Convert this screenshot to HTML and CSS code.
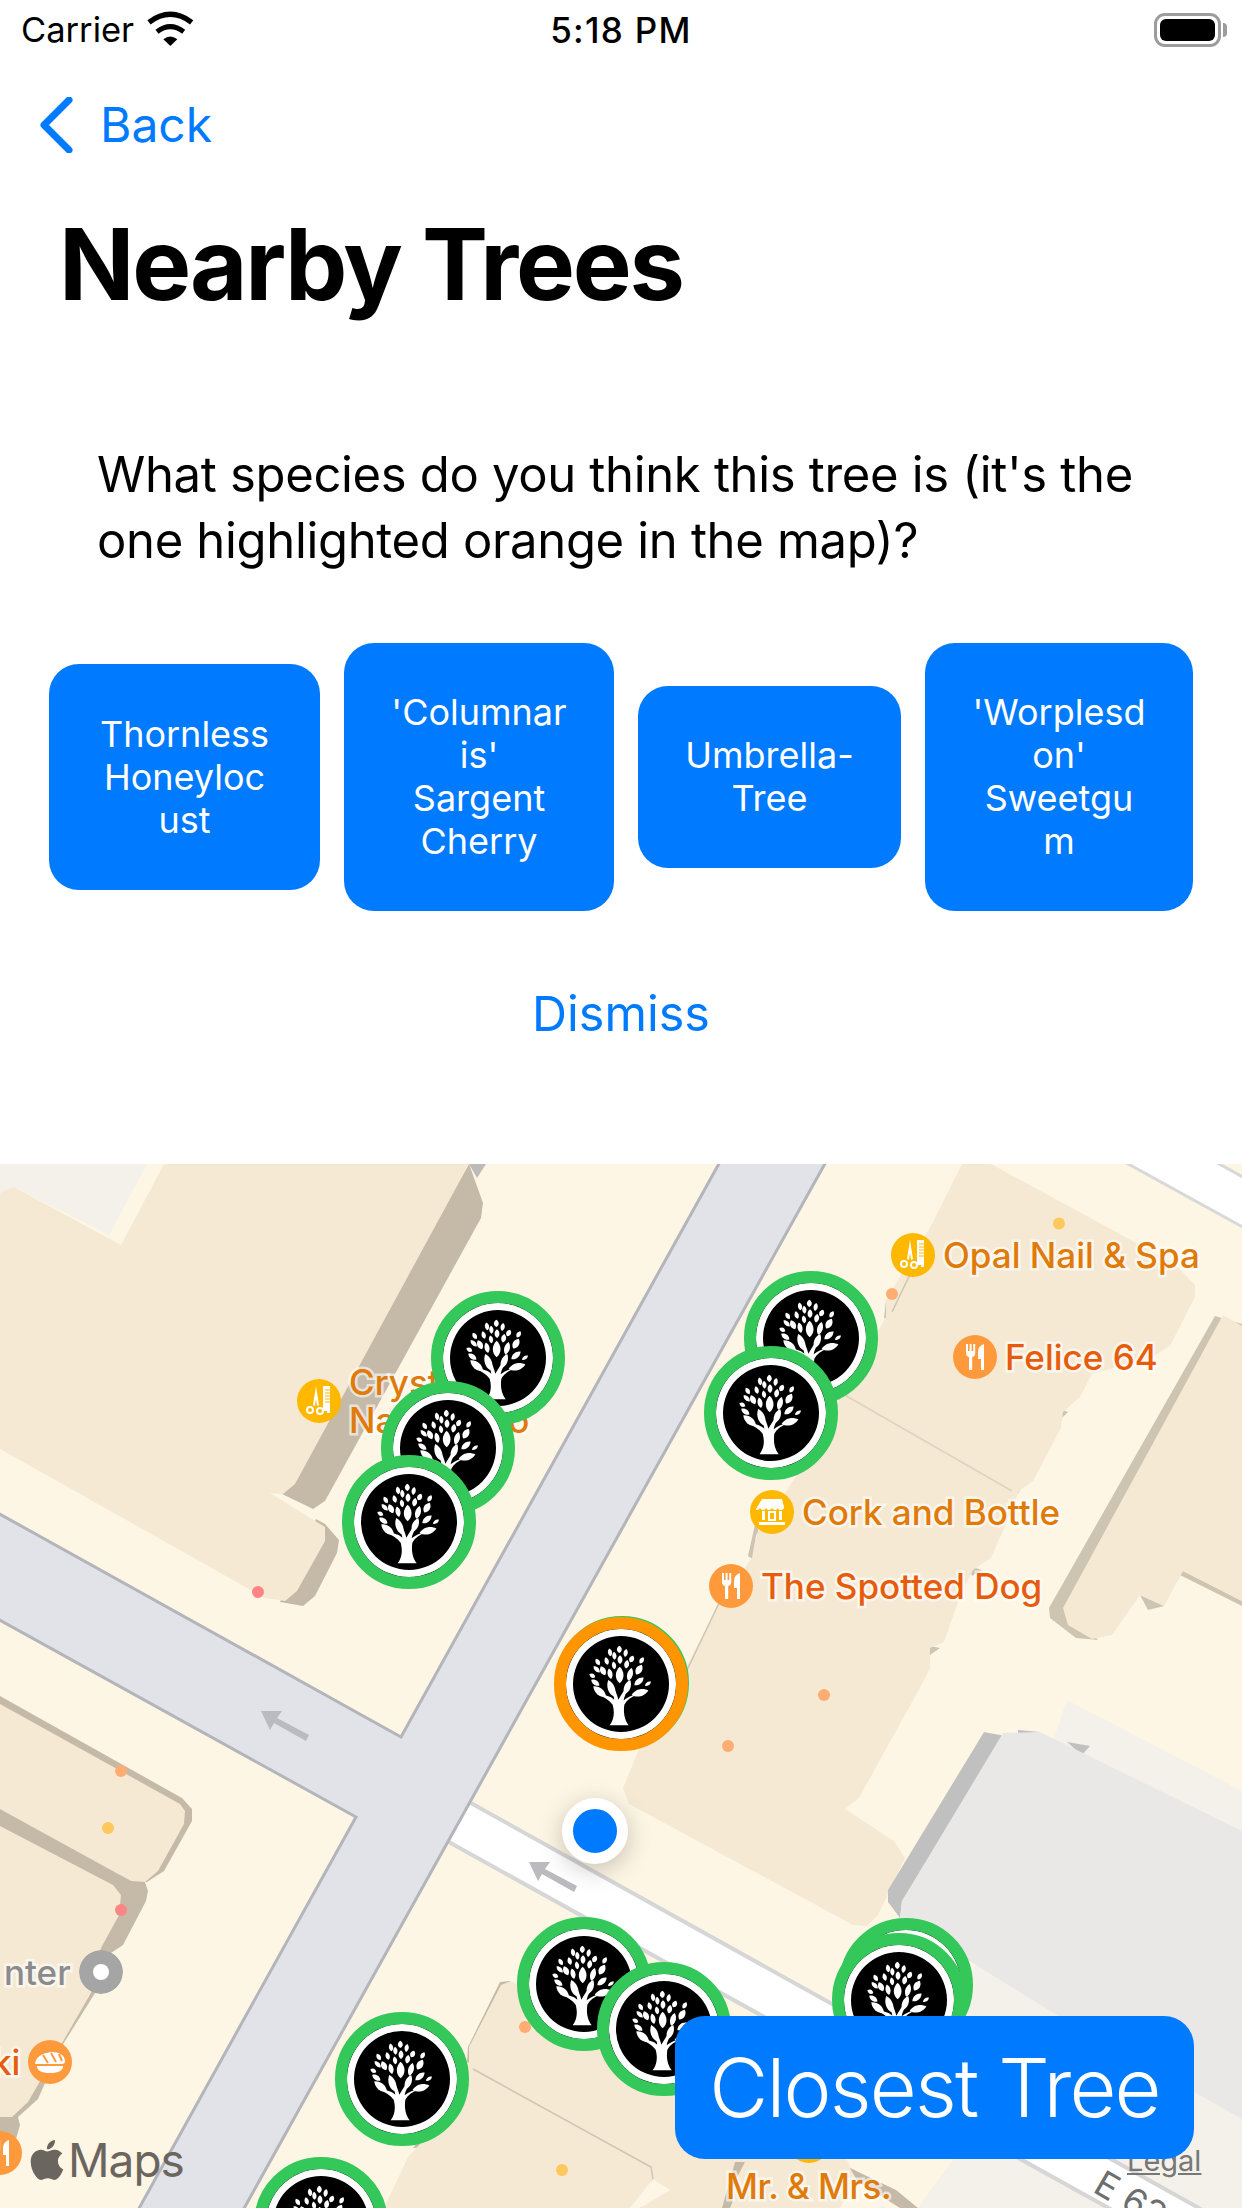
FILE: index.html
```html
<!DOCTYPE html>
<html lang="en">
<head>
<meta charset="utf-8">
<title>Nearby Trees</title>
<link rel="stylesheet" href="styles.css">
</head>
<body>
<header class="status">
  <div class="status-left">
    <span class="carrier">Carrier</span>
    <svg class="wifi" viewBox="0 0 180 150"><path d="M33 52Q97 4 161 52" fill="none" stroke="#000" stroke-width="16"/><path d="M57 80Q97 50 137 80" fill="none" stroke="#000" stroke-width="15"/><path d="M76 103Q97 86 118 103L97 123Z"/></svg>
  </div>
  <span class="time">5:18 PM</span>
  <div class="battery"><span class="battery-level"></span></div>
</header>
<nav class="nav">
  <svg class="chevron" viewBox="0 0 34 56"><path d="M30 3L5 28L30 53" fill="none" stroke="#007aff" stroke-width="7" stroke-linecap="round" stroke-linejoin="round"/></svg>
  <span class="back">Back</span>
</nav>
<h1 class="title">Nearby Trees</h1>
<p class="question">What species do you think this tree is (it's the<br>one highlighted orange in the map)?</p>
<section class="options">
  <button class="option opt-a">Thornless<br>Honeyloc<br>ust</button>
  <button class="option opt-b">'Columnar<br>is'<br>Sargent<br>Cherry</button>
  <button class="option opt-c">Umbrella-<br>Tree</button>
  <button class="option opt-d">'Worplesd<br>on'<br>Sweetgu<br>m</button>
</section>
<div class="dismiss">Dismiss</div>
<main class="map">
  <svg class="map-svg" viewBox="0 1164 1242 1044">
    <defs>
      <path id="leaf" d="M0-1C1.35-.45 1.45.45 0 1C-1.45.45-1.35-.45 0-1Z"/>
      <symbol id="tree" viewBox="0 0 402 402">
        <g fill="#fff">
          <path d="M167 325C181 305 182 285 176 263C166 249 150 240 128 232C150 232 170 238 181 248C179 235 175 222 170 212L178 210C185 222 190 236 193 248C199 238 207 224 216 212L223 215C216 229 210 240 209 250C222 240 236 234 250 232C232 240 218 250 211 263C208 285 210 305 224 325Z"/>
          <use href="#leaf" transform="translate(196 97) rotate(0) scale(7 11)"/>
          <use href="#leaf" transform="translate(168 106) rotate(-10) scale(6 12)"/>
          <use href="#leaf" transform="translate(215 108) rotate(10) scale(6 12)"/>
          <use href="#leaf" transform="translate(181 116) rotate(-5) scale(6 12)"/>
          <use href="#leaf" transform="translate(198 128) rotate(0) scale(7 13)"/>
          <use href="#leaf" transform="translate(233 126) rotate(25) scale(7 11)"/>
          <use href="#leaf" transform="translate(263 130) rotate(30) scale(6 11)"/>
          <use href="#leaf" transform="translate(131 135) rotate(-30) scale(6 11)"/>
          <use href="#leaf" transform="translate(158 132) rotate(-15) scale(6 12)"/>
          <use href="#leaf" transform="translate(180 145) rotate(-10) scale(6 12)"/>
          <use href="#leaf" transform="translate(218 142) rotate(10) scale(7 13)"/>
          <use href="#leaf" transform="translate(147 161) rotate(-25) scale(8 15)"/>
          <use href="#leaf" transform="translate(197 174) rotate(0) scale(11 25)"/>
          <use href="#leaf" transform="translate(168 170) rotate(-12) scale(7 16)"/>
          <use href="#leaf" transform="translate(228 172) rotate(15) scale(8 20)"/>
          <use href="#leaf" transform="translate(255 158) rotate(30) scale(9 17)"/>
          <use href="#leaf" transform="translate(128 157) rotate(-45) scale(6 13)"/>
          <use href="#leaf" transform="translate(115 176) rotate(-60) scale(6 10)"/>
          <use href="#leaf" transform="translate(124 197) rotate(-55) scale(7 15)"/>
          <use href="#leaf" transform="translate(172 214) rotate(-20) scale(10 27)"/>
          <use href="#leaf" transform="translate(137 224) rotate(-50) scale(10 25)"/>
          <use href="#leaf" transform="translate(220 210) rotate(22) scale(9 23)"/>
          <use href="#leaf" transform="translate(255 193) rotate(50) scale(8 18)"/>
          <use href="#leaf" transform="translate(282 200) rotate(55) scale(5 11)"/>
          <use href="#leaf" transform="translate(258 227) rotate(75) scale(10 26)"/>
        </g>
      </symbol>
      <symbol id="i-food" viewBox="0 0 44 44">
        <path fill="#fff" d="M13 9h2v7h1.6V9h2v7h1.6V9h2v9q0 3-3 4v13h-3.200V22q-3-1-3-4zM31 9v26h-3V24h-3v-7q0-6 6-8z"/>
      </symbol>
      <symbol id="i-shop" viewBox="0 0 44 44">
        <path fill="#fff" d="M12 9h20l2 8q0 3-3 3t-3-2q-1 2-3 2t-3-2q-1 2-3 2t-3-2q-1 2-3 2t-3-2q-1 2-3 2t-1-1zM12 21h3v9h-3zM29 21h3v9h-3zM18 21h8v2h-6v6h4v-6h2v8h-8zM9 32h26v3H9z"/>
      </symbol>
      <symbol id="i-hair" viewBox="0 0 44 44">
        <path fill="#fff" d="M19 7l3 19-2 1-1-7-1 7-2-1zM26 7h7v27h-3v-2h-4z"/>
        <path stroke="#ffb800" stroke-width="1.200" d="M28 11h5M28 14h5M28 17h5M28 20h5M28 23h5"/>
        <circle cx="13" cy="31" r="3" fill="none" stroke="#fff" stroke-width="2"/>
        <circle cx="23" cy="32" r="3" fill="none" stroke="#fff" stroke-width="2"/>
      </symbol>
      <symbol id="i-sushi" viewBox="0 0 44 44">
        <path fill="#fff" d="M7 24q1-10 16-12 13 0 14 9 0 3-3 3z"/>
        <path fill="none" stroke="#ff9a3c" stroke-width="2" d="M15 15l5 8M23 13l5 9M31 14l3 7"/>
        <path fill="#fff" d="M9 26h26q0 7-13 7T9 26z"/>
      </symbol>
    </defs>

    <!-- ground -->
    <rect x="0" y="1164" width="1242" height="1044" fill="#fef6e4"/>
    <path fill="#f3f1ea" d="M0 1164H147L109 1235L14 1187L10 1197L0 1192Z"/>
    <path fill="#f3f1ea" d="M1067 1700L1242 1791V2208H880L950 2040Z"/>

    <!-- white roads -->
    <path fill="#fff" stroke="#d8d8d8" stroke-width="3" d="M1121 1160L1250 1231V1181L1212 1160Z"/>
    <path fill="#fff" stroke="#d6d6d6" stroke-width="4" d="M469 1802L1260 2242L1260 2292L447 1841Z"/>
    <!-- grey roads -->
    <path fill="#e1e3e8" stroke="#b3b5ba" stroke-width="3" d="M721 1160L401 1737L-4 1512V1618L356 1817L137 2212H242L827 1160Z"/>

    <!-- building top-left -->
    <path fill="#bdbab8" d="M469 1164H486L477 1178Z"/>
    <path fill="#c5baa8" d="M469 1164L483 1203L481 1218L325 1501L313 1509L280 1493Z"/>
    <path fill="#c5baa8" d="M316 1519L325 1524L339 1540L337 1553L315 1596L303 1606L280 1602Z"/>
    <path fill="#f5e9d4" d="M164 1164H469L295 1484L283 1494L270 1493L325 1527L325 1541L297 1591L285 1601L265 1598L0 1449V1193L14 1187L121 1245Z"/>

    <!-- building top right -->
    <path fill="#cdc4b2" d="M932 1224L941 1238L929 1232ZM886 1300L900 1320L884 1318ZM1100 1330L1118 1352L1092 1342ZM1053 1406L1068 1412L1060 1420ZM1010 1490L1022 1486L1018 1494ZM756 1520L748 1556L766 1568ZM796 1464L815 1480L798 1480ZM845 1394L855 1402L838 1400ZM969 1566L982 1570L972 1576ZM925 1645L940 1648L930 1655Z"/>
    <path fill="#f5e9d4" d="M962 1164H991L1175 1264L1195 1285V1297L1170 1346L1152 1357L1092 1374L1080 1397L1063 1412L1061 1428L1033 1481L1019 1491L1005 1526L991 1558L973 1570L962 1591L944 1642L930 1648V1668L922 1684L859 1798L845 1809L894 1841L905 1858L878 1915L867 1926L853 1925L629 1804L623 1788L639 1749L684 1672L720 1601L752 1558L756 1535L795 1478L843 1394L886 1317V1300L932 1224Z"/>
    <path fill="none" stroke="#ddd3c1" stroke-width="1.500" d="M843 1394L1012 1491"/>
    <path fill="none" stroke="#cfc5b3" stroke-width="1.500" d="M915 1264L892 1312M720 1601L687 1670"/>

    <!-- building right -->
    <path fill="#cdc4b2" d="M1215 1316L1242 1324V1332L1223 1322L1079 1620L1098 1640L1076 1638L1050 1618L1049 1608ZM1183 1571L1242 1601V1606L1180 1575ZM1140 1595L1164 1606L1148 1610Z"/>
    <path fill="#f5e9d4" d="M1223 1315L1242 1326V1601L1183 1571L1164 1606L1140 1595L1112 1635L1092 1639L1068 1625L1063 1608Z"/>

    <!-- grey building -->
    <path fill="#c0c0c0" d="M984 1732L1005 1736L902 1901L900 1918L888 1902L888 1890ZM1018 1730L1040 1732L1032 1745L1018 1737ZM1067 1742L1090 1746L1082 1755Z"/>
    <path fill="#e9e8e6" d="M1003 1733L1040 1732L1242 1831V2119L1057 2015L900 1918L902 1901Z"/>

    <!-- building lower-left -->
    <path fill="#c5baa8" d="M0 1696L182 1798L192 1809V1821L164 1871L147 1882L131 1881L0 1806Z"/>
    <path fill="#f5e9d4" d="M0 1704L180 1804L185 1811L184 1824L158 1871L145 1882L131 1881L0 1809Z"/>
    <path fill="#c5baa8" d="M0 1809L131 1881L145 1882L148 1891L146 1901L123 1945L111 1953L95 1993L60 2049L38 2099L18 2117L20 2125L16 2139L0 2132Z"/>
    <path fill="#f5e9d4" d="M0 1826L113 1885L121 1895L119 1915L101 1948L91 1993L28 2102L12 2117L0 2117Z"/>

    <!-- buildings bottom centre -->
    <path fill="#c5baa8" d="M511 1981L500 1982L468 2047L467 2062L480 2070ZM420 2144L432 2150L424 2146ZM413 2148L432 2146L420 2140Z"/>
    <path fill="#f5e9d4" d="M511 1981L780 2128L740 2208H384L408 2157L420 2144L469 2062V2047L501 1985Z"/>
    <path fill="none" stroke="#cfc5b3" stroke-width="1.500" d="M473 2069L651 2167L653 2179L640 2208"/>
    <path fill="#fef6e4" d="M653 2179L670 2190L640 2208L630 2208Z"/>
    <path fill="#c5baa8" d="M745 2162L728 2195L740 2208H722L735 2162ZM850 2168L900 2196L918 2208H885L860 2186Z"/>
    <path fill="#f5e9d4" d="M760 2130L838 2142L856 2178L850 2190L840 2208H730L750 2160Z"/>
    <path fill="#fef6e4" d="M856 2150L960 2150L918 2208H885L860 2190Z"/>
    <path fill="#c5baa8" d="M850 2168L896 2190L918 2208H900L858 2182Z"/>

    <!-- small dots -->
    <g>
      <circle cx="1059" cy="1223.500" r="6" fill="#ffc85c"/>
      <circle cx="892" cy="1294" r="6" fill="#ffad73"/>
      <circle cx="258" cy="1592" r="6" fill="#ff8585"/>
      <circle cx="121" cy="1771" r="6" fill="#ffad73"/>
      <circle cx="108" cy="1828" r="6" fill="#ffc85c"/>
      <circle cx="121" cy="1910" r="6" fill="#ff8585"/>
      <circle cx="525" cy="2027" r="6" fill="#ffad73"/>
      <circle cx="562" cy="2170" r="6" fill="#ffc85c"/>
      <circle cx="824" cy="1695" r="6" fill="#ffad73"/>
      <circle cx="728" cy="1746" r="6" fill="#ffad73"/>
    </g>

    <!-- one way arrows -->
    <path fill="#b9bbbe" d="M261 1711L282 1711L277 1718L309 1735L306 1741L274 1723L270 1730Z"/>
    <path fill="#b9bbbe" d="M529 1862L550 1862L545 1869L577 1886L574 1892L542 1874L538 1881Z"/>
  </svg>

  <!-- map labels -->
  <div class="poi" style="left:891px;top:69px"><svg class="poi-icon amber" viewBox="0 0 44 44"><use href="#i-hair"/></svg><span class="poi-text orange-text">Opal Nail &amp; Spa</span></div>
  <div class="poi" style="left:953px;top:171px"><svg class="poi-icon tangerine" viewBox="0 0 44 44"><use href="#i-food"/></svg><span class="poi-text red-text">Felice 64</span></div>
  <div class="poi" style="left:750px;top:326px"><svg class="poi-icon amber" viewBox="0 0 44 44"><use href="#i-shop"/></svg><span class="poi-text orange-text">Cork and Bottle</span></div>
  <div class="poi" style="left:709px;top:400px"><svg class="poi-icon tangerine" viewBox="0 0 44 44"><use href="#i-food"/></svg><span class="poi-text red-text">The Spotted Dog</span></div>
  <div class="poi poi-two" style="left:297px;top:215px"><svg class="poi-icon amber" viewBox="0 0 44 44"><use href="#i-hair"/></svg><span class="poi-text orange-text">Crystal<br>Nail Studio</span></div>
  <div class="poi" style="left:4px;top:786px"><span class="poi-text grey-text">nter</span><svg class="poi-icon" viewBox="0 0 44 44"><circle cx="22" cy="22" r="22" fill="#a5a5a5"/><circle cx="22" cy="22" r="8" fill="#fff"/></svg></div>
  <div class="poi" style="left:-8px;top:876px"><span class="poi-text red-text">ki</span><svg class="poi-icon tangerine" viewBox="0 0 44 44"><use href="#i-sushi"/></svg></div>
  <div class="poi" style="left:-22px;top:967px"><svg class="poi-icon tangerine" viewBox="0 0 44 44"><use href="#i-food"/></svg></div>
  <div class="poi" style="left:787px;top:955px"><svg class="poi-icon amber" viewBox="0 0 44 44"><use href="#i-shop"/></svg></div>
  <span class="poi-text orange-text mrs">Mr. &amp; Mrs.<br>Naif</span>
  <span class="road-label">E 63rd St</span>

  <!-- tree pins -->
  <div class="pin" style="left:431px;top:127px"><svg class="tree"><use href="#tree" width="134" height="134"/></svg></div>
  <div class="pin" style="left:381px;top:217px"><svg class="tree"><use href="#tree" width="134" height="134"/></svg></div>
  <div class="pin" style="left:342px;top:291px"><svg class="tree"><use href="#tree" width="134" height="134"/></svg></div>
  <div class="pin" style="left:744px;top:107px"><svg class="tree"><use href="#tree" width="134" height="134"/></svg></div>
  <div class="pin" style="left:704px;top:182px"><svg class="tree"><use href="#tree" width="134" height="134"/></svg></div>
  <div class="pin" style="left:555px;top:452px"><svg class="tree"><use href="#tree" width="134" height="134"/></svg></div>
  <div class="pin pin-selected" style="left:554px;top:453px"><svg class="tree"><use href="#tree" width="134" height="134"/></svg></div>
  <div class="pin" style="left:517px;top:753px"><svg class="tree"><use href="#tree" width="134" height="134"/></svg></div>
  <div class="pin" style="left:597px;top:798px"><svg class="tree"><use href="#tree" width="134" height="134"/></svg></div>
  <div class="pin" style="left:335px;top:848px"><svg class="tree"><use href="#tree" width="134" height="134"/></svg></div>
  <div class="pin" style="left:254px;top:993px"><svg class="tree"><use href="#tree" width="134" height="134"/></svg></div>
  <div class="pin" style="left:839px;top:754px"><svg class="tree"><use href="#tree" width="134" height="134"/></svg></div>
  <div class="pin" style="left:832px;top:769px"><svg class="tree"><use href="#tree" width="134" height="134"/></svg></div>

  <div class="user-dot"></div>

  <div class="maps-logo">
    <svg class="apple" viewBox="0 0 24 24"><path fill="#6a665f" d="M12.152 6.896c-.948 0-2.415-1.078-3.96-1.04-2.04.027-3.91 1.183-4.961 3.014-2.117 3.675-.546 9.103 1.519 12.09 1.013 1.454 2.208 3.09 3.792 3.039 1.52-.065 2.09-.987 3.935-.987 1.831 0 2.35.987 3.96.948 1.637-.026 2.676-1.48 3.676-2.948 1.156-1.688 1.636-3.325 1.662-3.415-.039-.013-3.182-1.221-3.22-4.857-.026-3.04 2.48-4.494 2.597-4.559-1.429-2.09-3.623-2.324-4.39-2.376-2-.156-3.675 1.09-4.61 1.09zM15.53 3.83c.843-1.012 1.4-2.427 1.245-3.83-1.207.052-2.662.805-3.532 1.818-.78.896-1.454 2.338-1.273 3.714 1.338.104 2.715-.688 3.559-1.701"/></svg>
    <span class="maps-word">Maps</span>
  </div>
  <span class="legal">Legal</span>
  <button class="closest">Closest Tree</button>
</main>
</body>
</html>
```
FILE: styles.css
```css
* { box-sizing: border-box; }
html, body { margin: 0; padding: 0; }
body {
  width: 1242px;
  height: 2208px;
  background: #fff;
  color: #000;
  font-family: Inter, "Liberation Sans", sans-serif;
  display: flex;
  flex-direction: column;
  overflow: hidden;
}

/* status bar */
.status {
  height: 60px;
  flex: none;
  padding: 0 16px 0 21px;
  display: flex;
  align-items: center;
  justify-content: space-between;
  position: relative;
}
.status-left { display: flex; align-items: center; gap: 14px; }
.carrier { font-size: 34.500px; line-height: 62px; }
.wifi { width: 60px; height: 50px; margin-left: -10px; margin-top: 0; }
.time {
  font-size: 35px;
  font-weight: 500;
  letter-spacing: 1.300px;
  line-height: 62px;
  position: absolute;
  left: 0;
  right: 0;
  text-align: center;
}
.battery {
  width: 67px;
  height: 34px;
  margin-right: 5px;
  border: 3px solid #9c9c9c;
  border-radius: 11px;
  padding: 3px;
  position: relative;
}
.battery::after {
  content: "";
  position: absolute;
  right: -9px;
  top: 7px;
  width: 4px;
  height: 14px;
  background: #9c9c9c;
  border-radius: 0 4px 4px 0;
}
.battery-level { display: block; height: 100%; background: #000; border-radius: 6px; }

/* nav */
.nav {
  height: 130px;
  flex: none;
  padding: 0 0 0 39px;
  display: flex;
  align-items: center;
  gap: 27px;
}
.chevron { width: 34px; height: 56px; flex: none; }
.back { font-size: 48px; color: #007aff; line-height: 60px; }

.title {
  margin: 14px 0 0;
  padding-left: 59px;
  font-size: 99px;
  line-height: 120px;
  font-weight: 700;
  letter-spacing: -2.200px;
  flex: none;
}
.question {
  margin: 118px 0 0;
  padding-left: 97px;
  font-size: 49px;
  line-height: 66px;
  letter-spacing: -.330px;
  flex: none;
}

/* option buttons */
.options {
  margin: 69px 0 0 49px;
  height: 268px;
  display: flex;
  align-items: center;
  gap: 24px;
  flex: none;
}
.option {
  border: 0;
  padding: 0;
  border-radius: 30px;
  background: #007aff;
  color: #fff;
  font: 400 36px/43px Inter, "Liberation Sans", sans-serif;
  text-align: center;
}
.opt-a { width: 271px; height: 226px; }
.opt-b { width: 270px; height: 268px; }
.opt-c { width: 263px; height: 182px; }
.opt-d { width: 268px; height: 268px; }

.dismiss {
  margin-top: 70px;
  text-align: center;
  font-size: 48.500px;
  line-height: 66px;
  color: #007aff;
  flex: none;
}

/* map */
.map {
  margin-top: 117px;
  flex: 1;
  position: relative;
  overflow: hidden;
  background: #fef6e4;
}
.map-svg { display: block; width: 1242px; height: 1044px; }

.poi {
  position: absolute;
  display: flex;
  align-items: center;
  gap: 8px;
  height: 44px;
}
.poi-icon { width: 44px; height: 44px; flex: none; border-radius: 50%; }
.amber { background: #ffb800; }
.tangerine { background: #ff9a3c; }
.poi-text {
  font-size: 35px;
  line-height: 38px;
  font-weight: 500;
  white-space: nowrap;
  -webkit-text-stroke: 5px rgba(255, 255, 255, .6);
  paint-order: stroke fill;
}
.orange-text { color: #e07a08; }
.red-text { color: #e75c0c; }
.grey-text { color: #8b8b8b; }
.mrs {
  position: absolute;
  left: 726px;
  top: 1003px;
  letter-spacing: -.500px;
}
.road-label {
  position: absolute;
  left: 1098px;
  top: 994px;
  font-size: 36px;
  line-height: 44px;
  color: #6e6e6e;
  white-space: nowrap;
  transform: rotate(30deg);
  transform-origin: 0 50%;
}

/* tree pins */
.pin {
  position: absolute;
  width: 134px;
  height: 134px;
  border-radius: 50%;
  border: 12px solid #34c759;
  background: #000;
  box-shadow: inset 0 0 0 7px #fff;
}
.pin-selected { border-color: #ff9500; }
.tree {
  position: absolute;
  left: -12px;
  top: -12px;
  width: 134px;
  height: 134px;
}

.user-dot {
  position: absolute;
  left: 562px;
  top: 634px;
  width: 66px;
  height: 66px;
  border-radius: 50%;
  background: #007aff;
  border: 11px solid #fff;
  box-shadow: 0 6px 24px rgba(0, 0, 0, .22);
}

.maps-logo {
  position: absolute;
  left: 27px;
  top: 972px;
  display: flex;
  align-items: center;
  gap: 1px;
  height: 48px;
}
.apple { width: 40px; height: 40px; flex: none; }
.maps-word { font-size: 46px; line-height: 48px; color: #6a665f; letter-spacing: -1px; }

.legal {
  position: absolute;
  left: 1127px;
  top: 979px;
  font-size: 29px;
  line-height: 36px;
  color: #777;
  text-decoration: underline;
}

.closest {
  position: absolute;
  left: 675px;
  top: 852px;
  width: 519px;
  height: 143px;
  border: 0;
  padding: 0;
  border-radius: 30px;
  background: #007aff;
  color: #fff;
  font: 300 81px/100px Inter, "Liberation Sans", sans-serif;
  letter-spacing: -1.800px;
  text-align: center;
}
```
